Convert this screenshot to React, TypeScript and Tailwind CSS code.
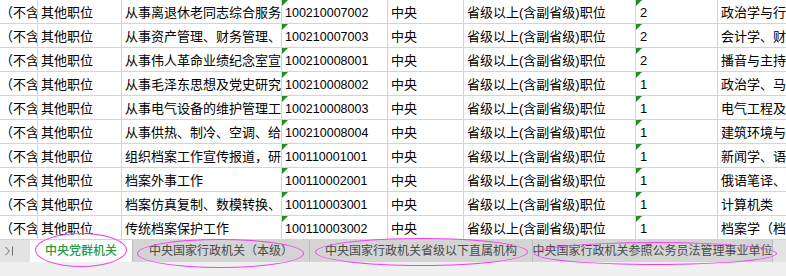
const rows = [
  { desc: "从事离退休老同志综合服务工作", code: "100210007002", num: "2", major: "政治学与行政学" },
  { desc: "从事资产管理、财务管理、审计", code: "100210007003", num: "2", major: "会计学、财务管理" },
  { desc: "从事伟人革命业绩纪念室宣传讲解", code: "100210008001", num: "2", major: "播音与主持艺术" },
  { desc: "从事毛泽东思想及党史研究工作", code: "100210008002", num: "1", major: "政治学、马克思" },
  { desc: "从事电气设备的维护管理工作", code: "100210008003", num: "1", major: "电气工程及其自动化" },
  { desc: "从事供热、制冷、空调、给排水", code: "100210008004", num: "1", major: "建筑环境与设备" },
  { desc: "组织档案工作宣传报道，研究", code: "100110001001", num: "1", major: "新闻学、语言学" },
  { desc: "档案外事工作", code: "100110002001", num: "1", major: "俄语笔译、口译" },
  { desc: "档案仿真复制、数模转换、修复", code: "100110003001", num: "1", major: "计算机类" },
  { desc: "传统档案保护工作", code: "100110003002", num: "1", major: "档案学（档案" },
];

const tabs = [
  { label: "中央党群机关", w: "w-[103px]", active: true },
  { label: "中央国家行政机关（本级）", w: "w-[177px]", active: false },
  { label: "中央国家行政机关省级以下直属机构", w: "w-[223px]", active: false },
  { label: "中央国家行政机关参照公务员法管理事业单位", w: "w-[240px]", active: false },
];

function Cell({ w, children, flag }: { w: string; children: React.ReactNode; flag?: boolean }) {
  return (
    <div className={`relative ${w} shrink-0 h-full border-r border-[#d4d4d4] overflow-hidden flex items-end pl-[3px] pb-[1px] whitespace-nowrap`}>
      {flag && (
        <span className="absolute left-0 top-0 w-0 h-0 border-t-[6px] border-t-[#1f8f1f] border-r-[6px] border-r-transparent" />
      )}
      {children}
    </div>
  );
}

export default function App() {
  return (
    <div
      className="relative w-[786px] h-[276px] bg-white overflow-hidden text-[13px] text-black leading-[18px]"
      style={{ fontFamily: "'Liberation Sans', 'Noto Sans CJK SC', sans-serif" }}
    >
      {/* sheet grid */}
      <div className="flex flex-col">
        {rows.map((r) => (
          <div key={r.code} className="flex h-[24px] border-b border-[#d4d4d4]">
            <div className="w-[38px] shrink-0 h-full border-r border-[#d4d4d4] overflow-hidden flex items-end pb-[1px] whitespace-nowrap">
              （不含选调生）
            </div>
            <Cell w="w-[84px]">其他职位</Cell>
            <Cell w="w-[160px]">{r.desc}</Cell>
            <Cell w="w-[106px]" flag>
              <span className="text-[12.5px]">{r.code}</span>
            </Cell>
            <Cell w="w-[76px]">中央</Cell>
            <Cell w="w-[172px]">省级以上(含副省级)职位</Cell>
            <Cell w="w-[82px]" flag>
              <span className="pl-[1px]">{r.num}</span>
            </Cell>
            <div className="flex-1 h-full overflow-hidden flex items-end pl-[3px] pb-[1px] whitespace-nowrap">{r.major}</div>
          </div>
        ))}
      </div>

      {/* sheet tabs */}
      <div className="flex h-[22px] bg-[#e3e3e3] text-[12px]">
        <div className="w-[30px] shrink-0 flex items-center pl-[4px] text-[#6b6b6b]">
          <svg width="10" height="12" viewBox="0 0 10 12" fill="none" stroke="currentColor" strokeWidth="1">
            <path d="M1.5 2 L5.5 6 L1.5 10" />
            <path d="M8.5 1.5 V10.5" />
          </svg>
        </div>
        {tabs.map((t) => (
          <div
            key={t.label}
            className={`${t.w} shrink-0 h-full overflow-hidden whitespace-nowrap flex items-center justify-center border-r border-[#bdbdbd] ${
              t.active ? "bg-white text-[#2a9a3a] font-medium" : "bg-[#d4d4d4] text-[#4a4a4a]"
            }`}
          >
            {t.label}
          </div>
        ))}
      </div>
      <div className="h-[14px] bg-[#f0f0f0]" />

      {/* hand-drawn highlight ellipses */}
      <div className="absolute left-[35px] top-[233px] w-[92px] h-[34px] rounded-[50%] border-[1.5px] border-[#f040f0]" />
      <div className="absolute left-[137px] top-[239px] w-[167px] h-[29px] rounded-[50%] border-[1.5px] border-[#f040f0]" />
      <div className="absolute left-[315px] top-[238px] w-[213px] h-[28px] rounded-[50%] border-[1.5px] border-[#f040f0]" />
      <div className="absolute left-[534px] top-[242px] w-[243px] h-[23px] rounded-[50%] border-[1.5px] border-[#f040f0]" />
    </div>
  );
}
